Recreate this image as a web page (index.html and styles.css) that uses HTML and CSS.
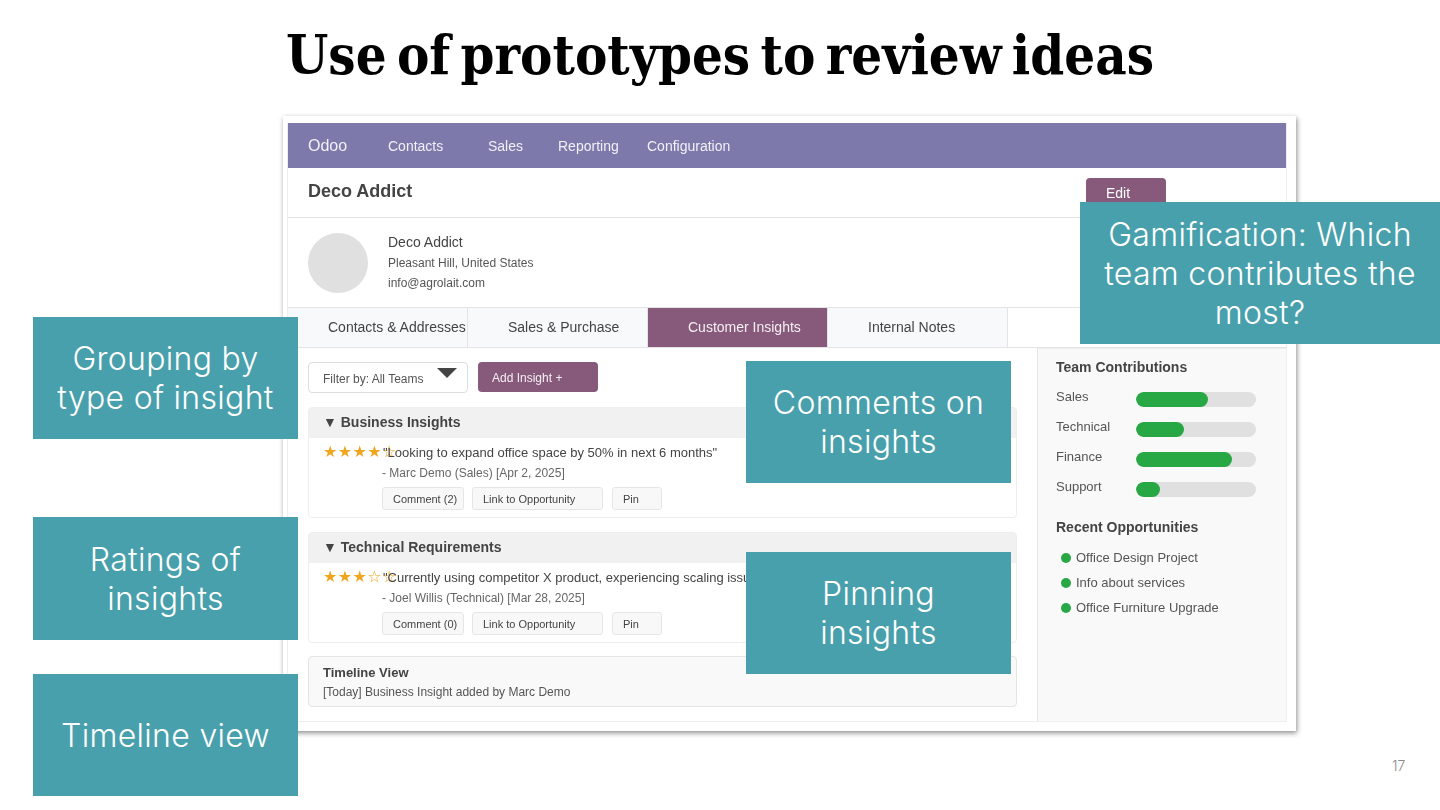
FILE: index.html
```html
<!DOCTYPE html>
<html lang="en">
<head>
  <meta charset="UTF-8">
  <meta name="viewport" content="width=device-width, initial-scale=1.0">
  <title>Use of prototypes to review ideas</title>
  <link rel="stylesheet" href="styles.css">
</head>
<body>
  <div class="slide">
    <h1 class="slide-title">Use of prototypes to review ideas</h1>

    <div class="shot">
      <div class="app">
        <div class="nav">
          <span class="brand">Odoo</span>
          <span class="nav-contacts">Contacts</span>
          <span class="nav-sales">Sales</span>
          <span class="nav-reporting">Reporting</span>
          <span>Configuration</span>
        </div>

        <div class="record-head">
          <b class="record-name">Deco Addict</b>
          <span class="btn-edit">Edit</span>
        </div>

        <div class="profile">
          <div class="avatar"></div>
          <div class="profile-text">
            <div class="profile-name">Deco Addict</div>
            <div class="profile-place">Pleasant Hill, United States</div>
            <div>info@agrolait.com</div>
          </div>
        </div>

        <div class="tabs">
          <div class="tab">Contacts &amp; Addresses</div>
          <div class="tab">Sales &amp; Purchase</div>
          <div class="tab active">Customer Insights</div>
          <div class="tab">Internal Notes</div>
        </div>

        <div class="content">
          <div class="main">
            <div class="toolbar">
              <div class="filter">Filter by: All Teams<span class="caret"></span></div>
              <div class="btn-add">Add Insight +</div>
            </div>

            <div class="group">
              <div class="group-head">▼ Business Insights</div>
              <div class="insight">
                <div class="quote"><span class="stars">★★★★☆</span><span>"Looking to expand office space by 50% in next 6 months"</span></div>
                <div class="meta">- Marc Demo (Sales) [Apr 2, 2025]</div>
                <div class="actions">
                  <span class="act act-comment">Comment (2)</span>
                  <span class="act act-link">Link to Opportunity</span>
                  <span class="act act-pin">Pin</span>
                </div>
              </div>
            </div>

            <div class="group group-last">
              <div class="group-head">▼ Technical Requirements</div>
              <div class="insight">
                <div class="quote"><span class="stars">★★★☆☆</span><span>"Currently using competitor X product, experiencing scaling issues"</span></div>
                <div class="meta">- Joel Willis (Technical) [Mar 28, 2025]</div>
                <div class="actions">
                  <span class="act act-comment">Comment (0)</span>
                  <span class="act act-link">Link to Opportunity</span>
                  <span class="act act-pin">Pin</span>
                </div>
              </div>
            </div>

            <div class="timeline">
              <b>Timeline View</b>
              <div class="timeline-row">[Today] Business Insight added by Marc Demo</div>
            </div>
          </div>

          <div class="side">
            <div class="side-title">Team Contributions</div>
            <div class="bar-row"><span class="bar-label">Sales</span><div class="bar"><div class="fill" style="width: 60%"></div></div></div>
            <div class="bar-row"><span class="bar-label">Technical</span><div class="bar"><div class="fill" style="width: 40%"></div></div></div>
            <div class="bar-row"><span class="bar-label">Finance</span><div class="bar"><div class="fill" style="width: 80%"></div></div></div>
            <div class="bar-row"><span class="bar-label">Support</span><div class="bar"><div class="fill" style="width: 20%"></div></div></div>
            <div class="side-title recent">Recent Opportunities</div>
            <div class="opp"><i class="dot"></i>Office Design Project</div>
            <div class="opp"><i class="dot"></i>Info about services</div>
            <div class="opp"><i class="dot"></i>Office Furniture Upgrade</div>
          </div>
        </div>
      </div>
    </div>

    <div class="note note-grouping">Grouping by<br>type of insight</div>
    <div class="note note-ratings">Ratings of<br>insights</div>
    <div class="note note-timeline">Timeline view</div>
    <div class="note note-comments">Comments on<br>insights</div>
    <div class="note note-pinning">Pinning<br>insights</div>
    <div class="note note-game">Gamification: Which<br>team contributes the<br>most?</div>

    <div class="page-num">17</div>
  </div>
</body>
</html>
```

FILE: styles.css
```css
* {
  box-sizing: border-box;
}
body {
  margin: 0;
  background: #fff;
}
.slide {
  position: relative;
  width: 1440px;
  height: 810px;
  overflow: hidden;
  background: #fff;
  font-family: "Liberation Sans", Arial, sans-serif;
  color: #444;
}
.slide-title {
  margin: 0;
  height: 116px;
  padding-top: 21px;
  text-align: center;
  font-family: "DejaVu Serif Condensed", "DejaVu Serif", serif;
  font-size: 54px;
  line-height: 68px;
  font-weight: 700;
  word-spacing: -6.6px;
  color: #000;
  white-space: nowrap;
}

/* screenshot of the prototype */
.shot {
  width: 1013px;
  height: 615px;
  margin-left: 283px;
  padding: 7px 9px 9px 4px;
  background: #fff;
  box-shadow: 1px 2px 5px rgba(0, 0, 0, 0.45);
}
.app {
  height: 599px;
  border: 1px solid #eee;
  border-top: 0;
  display: flex;
  flex-direction: column;
  filter: blur(0.35px);
}
.nav {
  height: 45px;
  flex: none;
  display: flex;
  align-items: center;
  padding-left: 20px;
  background: #7d79ab;
  color: #f1f0f6;
  font-size: 14px;
}
.brand {
  width: 80px;
  font-size: 16px;
}
.nav-contacts {
  width: 100px;
}
.nav-sales {
  width: 70px;
}
.nav-reporting {
  width: 89px;
}
.record-head {
  height: 50px;
  flex: none;
  display: flex;
  justify-content: space-between;
  padding: 10px 120px 0 20px;
  border-bottom: 1px solid #e4e4e4;
}
.record-name {
  font-size: 18px;
  line-height: 27px;
}
.btn-edit {
  width: 80px;
  height: 30px;
  padding: 7px 0 0 20px;
  border-radius: 4px;
  background: #875a7b;
  color: #fff;
  font-size: 14px;
}
.profile {
  height: 90px;
  flex: none;
  display: flex;
  padding: 15px 20px;
  border-bottom: 1px solid #e4e4e4;
}
.avatar {
  width: 60px;
  height: 60px;
  border-radius: 50%;
  background: #e0e0e0;
  margin-right: 20px;
}
.profile-text {
  margin-top: -1px;
  font-size: 12px;
  line-height: 20px;
  color: #555;
}
.profile-name {
  margin-bottom: 2px;
  font-size: 14px;
  color: #444;
}
.profile-place {
  line-height: 19px;
}
.tabs {
  height: 40px;
  flex: none;
  display: flex;
  border-bottom: 1px solid #e4e4e4;
  font-size: 14px;
}
.tab {
  width: 180px;
  padding: 11px 0 0 40px;
  white-space: nowrap;
  background: #f8f9fa;
  border-right: 1px solid #e4e4e4;
}
.tab.active {
  background: #875a7b;
  color: #f4eff3;
}
.content {
  flex: 1;
  display: flex;
  min-height: 0;
}
.main {
  width: 749px;
  padding: 14px 20px 0;
}
.toolbar {
  display: flex;
  gap: 10px;
  height: 45px;
}
.filter {
  position: relative;
  width: 160px;
  height: 31px;
  padding: 9px 0 0 14px;
  border: 1px solid #ddd;
  border-radius: 4px;
  font-size: 12px;
  color: #555;
}
.caret {
  position: absolute;
  top: 5px;
  right: 10px;
  border-left: 10px solid transparent;
  border-right: 10px solid transparent;
  border-top: 10px solid #444;
}
.btn-add {
  width: 120px;
  height: 30px;
  padding: 9px 0 0 14px;
  border-radius: 4px;
  background: #875a7b;
  color: #f4eff3;
  font-size: 12px;
}
.group {
  height: 111px;
  margin-bottom: 14px;
  border: 1px solid #eee;
  border-radius: 4px;
}
.group-last {
  margin-bottom: 13px;
}
.group-head {
  height: 30px;
  padding: 6px 0 0 14px;
  background: #f1f1f1;
  font-size: 14px;
  font-weight: 700;
}
.insight {
  padding: 6px 0 0 14px;
}
.quote {
  display: flex;
  height: 17px;
  font-size: 13px;
  line-height: 17px;
  color: #444;
  white-space: nowrap;
}
.stars {
  width: 60px;
  flex: none;
  font-family: "DejaVu Sans", sans-serif;
  font-size: 16px;
  line-height: 16px;
  letter-spacing: 0.4px;
  color: #f0a51e;
}
.meta {
  margin: 5px 0 0 59px;
  font-size: 12px;
  line-height: 15px;
  color: #666;
}
.actions {
  display: flex;
  gap: 8px;
  margin: 6px 0 0 59px;
}
.act {
  height: 23px;
  padding: 5px 0 0 10px;
  border: 1px solid #e6e6e6;
  border-radius: 3px;
  background: #f8f8f8;
  font-size: 11px;
  color: #444;
}
.act-comment {
  width: 82px;
}
.act-link {
  width: 131px;
}
.act-pin {
  width: 50px;
  margin-left: 1px;
}
.timeline {
  height: 51px;
  padding: 8px 14px;
  border: 1px solid #e4e4e4;
  border-radius: 4px;
  background: #f9f9f9;
  font-size: 13px;
  line-height: 15px;
}
.timeline-row {
  margin-top: 5px;
  font-size: 12px;
  color: #555;
}
.side {
  flex: 1;
  padding: 9px 18px;
  background: #f9f9f9;
  border-left: 1px solid #e4e4e4;
  border-top: 1px solid #eee;
}
.side-title {
  font-size: 14px;
  font-weight: 700;
  line-height: 18px;
  margin-bottom: 16px;
}
.recent {
  margin: 21px 0 14px;
}
.bar-row {
  display: flex;
  align-items: center;
  height: 15px;
  margin-bottom: 15px;
  font-size: 13px;
  color: #555;
}
.bar-label {
  width: 80px;
  margin-top: -6px;
}
.bar {
  width: 120px;
  height: 15px;
  border-radius: 8px;
  background: #e0e0e0;
  overflow: hidden;
}
.fill {
  height: 100%;
  border-radius: 8px;
  background: #28a745;
}
.opp {
  display: flex;
  align-items: center;
  height: 15px;
  margin-bottom: 10px;
  padding-left: 5px;
  font-size: 13px;
  color: #555;
}
.dot {
  width: 10px;
  height: 10px;
  margin-right: 5px;
  border-radius: 50%;
  background: #28a745;
}

/* teal callouts laid over the screenshot */
.note {
  position: absolute;
  display: flex;
  align-items: center;
  justify-content: center;
  width: 265px;
  background: #48a0ac;
  color: #fff;
  text-align: center;
  font-family: Inter, "Liberation Sans", sans-serif;
  font-size: 32px;
  font-weight: 300;
  line-height: 39px;
  letter-spacing: 0.3px;
}
.note-grouping {
  left: 33px;
  top: 317px;
  height: 122px;
}
.note-ratings {
  left: 33px;
  top: 517px;
  height: 123px;
}
.note-timeline {
  left: 33px;
  top: 674px;
  height: 122px;
}
.note-comments {
  left: 746px;
  top: 361px;
  height: 122px;
}
.note-pinning {
  left: 746px;
  top: 552px;
  height: 122px;
}
.note-game {
  left: 1080px;
  top: 202px;
  width: 360px;
  height: 142px;
}
.page-num {
  position: absolute;
  left: 1392px;
  top: 757px;
  font-family: Inter, "Liberation Sans", sans-serif;
  font-size: 14px;
  font-weight: 300;
  color: #8a8a8a;
}
```
